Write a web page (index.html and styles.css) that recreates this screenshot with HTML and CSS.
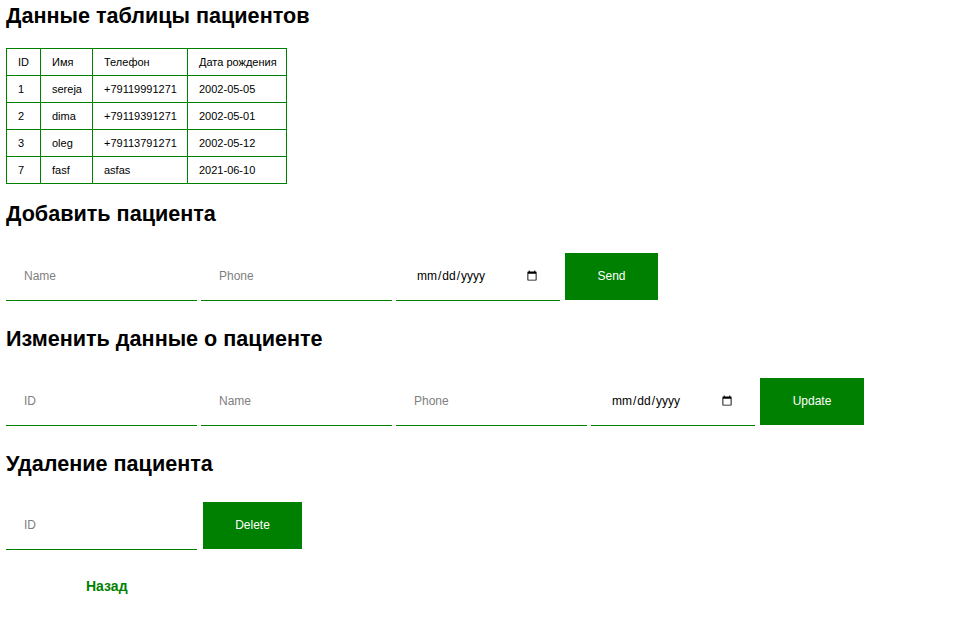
FILE: index.html
```html
<!DOCTYPE html>
<html lang="ru">
<head>
<meta charset="utf-8">
<title>Пациенты</title>
<link rel="stylesheet" href="styles.css">
</head>
<body>
<h2 class="title first">Данные таблицы пациентов</h2>
<table class="patients">
  <colgroup>
    <col class="c-id"><col class="c-name"><col class="c-phone"><col class="c-date">
  </colgroup>
  <thead>
    <tr><th>ID</th><th>Имя</th><th>Телефон</th><th>Дата рождения</th></tr>
  </thead>
  <tbody>
    <tr><td>1</td><td>sereja</td><td>+79119991271</td><td>2002-05-05</td></tr>
    <tr><td>2</td><td>dima</td><td>+79119391271</td><td>2002-05-01</td></tr>
    <tr><td>3</td><td>oleg</td><td>+79113791271</td><td>2002-05-12</td></tr>
    <tr><td>7</td><td>fasf</td><td>asfas</td><td>2021-06-10</td></tr>
  </tbody>
</table>

<h2 class="title">Добавить пациента</h2>
<form class="row">
  <input class="field" type="text" placeholder="Name">
  <input class="field" type="text" placeholder="Phone">
  <input class="field date" type="date">
  <button class="btn btn-send" type="button">Send</button>
</form>

<h2 class="title">Изменить данные о пациенте</h2>
<form class="row">
  <input class="field" type="text" placeholder="ID">
  <input class="field" type="text" placeholder="Name">
  <input class="field" type="text" placeholder="Phone">
  <input class="field date" type="date">
  <button class="btn btn-update" type="button">Update</button>
</form>

<h2 class="title">Удаление пациента</h2>
<form class="row row-last">
  <input class="field" type="text" placeholder="ID">
  <button class="btn btn-delete" type="button">Delete</button>
</form>

<a class="back" href="#">Назад</a>
</body>
</html>
```

FILE: styles.css
```css
* { box-sizing: border-box; }

body {
  margin: 0;
  padding: 2px 6px 0;
  font-family: "Liberation Sans", Arial, sans-serif;
  color: #000;
  background: #fff;
}

.title {
  font-size: 21.6px;
  font-weight: bold;
  margin: 0;
  line-height: 28px;
}

.title.first { margin-bottom: 18px; }

.patients {
  border-collapse: collapse;
  table-layout: fixed;
  width: 280px;
  font-size: 11px;
  margin-bottom: 16px;
}

.c-id { width: 34px; }
.c-name { width: 52px; }
.c-phone { width: 95px; }
.c-date { width: 99px; }

.patients th,
.patients td {
  border: 1px solid #008000;
  height: 27px;
  padding: 0 0 0 11px;
  text-align: left;
  font-weight: normal;
  white-space: nowrap;
}

.row {
  display: flex;
  align-items: flex-start;
  gap: 4px;
  margin: 25px 0 24px;
}

.row-last { margin-top: 24px; }

.field {
  width: 191px;
  height: 48px;
  border: none;
  border-bottom: 1px solid #008000;
  padding: 0 18px 1px;
  font-family: "Liberation Sans", Arial, sans-serif;
  font-size: 12px;
  color: #000;
  background: #fff;
  outline: none;
}

.field::placeholder { color: #808080; }

.field.date {
  width: 164px;
  padding: 0 20px 1px;
}

.btn {
  height: 47px;
  border: none;
  background: #008000;
  color: #fff;
  font-family: "Liberation Sans", Arial, sans-serif;
  font-size: 12px;
  padding: 0 0 1px;
  margin-left: 1px;
  cursor: pointer;
}

.btn-send { width: 93px; }
.btn-update { width: 104px; }
.btn-delete { width: 99px; margin-left: 2px; }

.back {
  display: inline-block;
  margin: 4px 0 0 80px;
  color: #008000;
  font-weight: bold;
  font-size: 14px;
  text-decoration: none;
}
```
